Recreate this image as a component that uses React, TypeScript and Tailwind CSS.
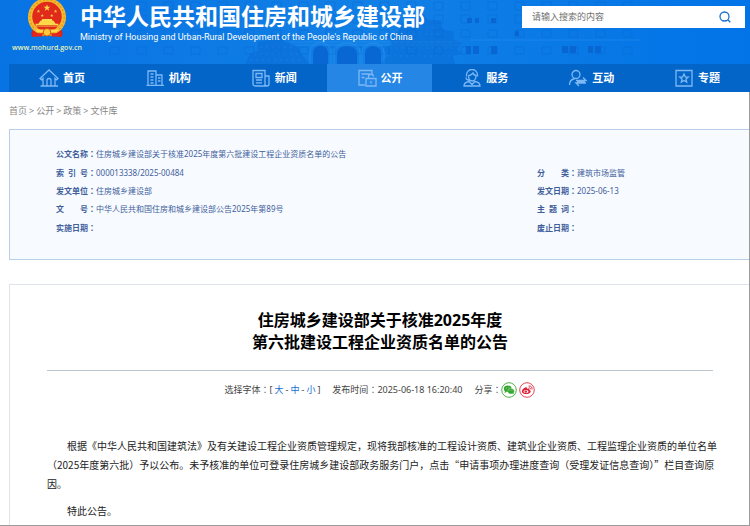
import React from "react";
import type { ReactNode } from "react";

const line = { fill: "none", stroke: "currentColor", strokeWidth: 1.3 } as const;

function NavIcon({ children }: { children: ReactNode }) {
  return (
    <svg viewBox="0 0 20 18" className="h-[18px] w-5 shrink-0 text-[#7db9f5]" aria-hidden="true" {...line}>
      {children}
    </svg>
  );
}

const navItems: { label: string; active?: boolean; icon: ReactNode }[] = [
  {
    label: "首页",
    icon: <path d="M1 9.5 10 1l9 8.5-1.5 1.3L16 9.5V17h-4v-5.5a2 2 0 0 0-4 0V17H4V9.500L2.500 10.800ZM1.500 17H19" />,
  },
  {
    label: "机构",
    icon: <path d="M3 16V2h8v14M11 6h6v10M1.500 16.300H19M5.500 5h3M5.500 8h3M5.500 11h3M5.500 14h3M13 9h2.500M13 12h2.500" />,
  },
  {
    label: "新闻",
    icon: <path d="M2 1.500h12V17H4a2 2 0 0 1-2-2ZM14 7h4v8a2 2 0 0 1-4 0M5 4.500h6v4H5ZM5 11h6M5 13.800h6" />,
  },
  {
    label: "公开",
    active: true,
    icon: (
      <path d="M8 16H2V1.500h13V6M4.500 5h8M4.500 8.500h3M9 9.500h10V17H9ZM11.500 9.500V8a2.500 2.500 0 0 1 5-.5M14 12v2.500" />
    ),
  },
  {
    label: "服务",
    icon: (
      <path d="M4.500 7.500V6a5.500 5.500 0 0 1 11 0v1.500M6.500 6.500C9 6.500 10 5 11 4c.5 1.500 1.500 2.500 3 2.500 0 3-1.500 5.500-3.800 5.500S6.500 9.500 6.500 6.500M4 8.500c0 2 2 2.800 4 2.800M2 17c0-2.500 2-4 5-4.500l3 3 3-3c3 .5 5 2 5 4.500Z" />
    ),
  },
  {
    label: "互动",
    icon: (
      <path d="M8 1.500a4 4 0 1 1 0 8 4 4 0 0 1 0-8M1.500 16c0-4 2.500-6 5.500-6.500M8 11.500h10l-3-3M18 14H8l3 3M9 12.800h8" />
    ),
  },
  {
    label: "专题",
    icon: (
      <path d="M2 1.500h16V17H2ZM10 5l1.300 2.800 3 .3-2.300 2 .7 3-2.700-1.600-2.700 1.600.7-3-2.300-2 3-.3Z" />
    ),
  },
];

function Emblem() {
  const star = "M0-3 .8-1H3L1.200.300 1.900 2.500 0 1.200-1.900 2.500-1.200.300-3-1H-.8Z";
  return (
    <svg viewBox="0 0 42 44" className="-mt-1 h-11 w-10" role="img" aria-label="国徽">
      <path d="M7 34c-3 2-3 5-1 8 5-2 9-1 15-1s10-1 15 1c2-3 2-6-1-8Z" fill="#d9201c" />
      <circle cx="21" cy="21" r="20" fill="#f5b82e" />
      <circle cx="21" cy="21" r="18" fill="none" stroke="#e39a1c" strokeWidth="1.500" strokeDasharray="2 2" />
      <circle cx="21" cy="20.500" r="15.500" fill="#e02a1c" />
      <g fill="#ffd84a">
        <path d={star} transform="translate(21 11.500) scale(1.200)" />
        <path d={star} transform="translate(12 15) scale(.6)" />
        <path d={star} transform="translate(30 15) scale(.6)" />
        <path d={star} transform="translate(16 19.500) scale(.55)" />
        <path d={star} transform="translate(26 19.500) scale(.55)" />
        <path d="M15 25h12l-1-2H16ZM12 28h18l-2-3H14ZM9 31h24v-3H9Z" />
        <path d="M8 34h26l-3 3H11Z" />
      </g>
      <path d="M10 30h22" stroke="#d9201c" strokeWidth=".7" />
      <circle cx="21" cy="37" r="4" fill="#ffc93a" stroke="#c9501b" />
      <path d="M7 35c4 4 8 3 10 3l-2 4c-3-1-6 0-9 0ZM35 35c-4 4-8 3-10 3l2 4c3-1 6 0 9 0Z" fill="#e3271c" />
    </svg>
  );
}

function HeaderScene() {
  const cols = Array.from({ length: 20 }, (_, i) => 110 + i * 27);
  return (
    <svg
      viewBox="0 0 750 64"
      preserveAspectRatio="xMidYMin slice"
      className="absolute inset-0 h-16 w-full"
      aria-hidden="true"
    >
      <defs>
        <linearGradient id="sky" x1="0" x2="1">
          <stop offset="0" stopColor="#0873e3" />
          <stop offset=".5" stopColor="#1180e6" />
          <stop offset=".8" stopColor="#0878e6" />
          <stop offset="1" stopColor="#0274e8" />
        </linearGradient>
      </defs>
      <rect width="750" height="64" fill="url(#sky)" />
      <g fill="none" stroke="#0a6bd6" opacity=".5">
        {cols.map((x) => (
          <path key={x} d={`M${x} 2h9v8h-9ZM${x} 15h9v8h-9ZM${x} 30h9v7h-9ZM${x} 47h9v7h-9Z`} />
        ))}
      </g>
      <path d="M290 42h170M290 45h170M470 40h170" stroke="#2b91ee" opacity=".5" />
      <g fill="#0968d3" opacity=".45">
        <path d="m381 64 7-9-4-6 8-5-5-8 11-4 3-9 12-2 7-10 8 9 13 0 1 9 12 3-1 7 9 4-5 6 5 5-9 2 2 8Z" />
        <path d="m392 64 4-12 6-3-1-11 10-4 6-12 9-3 7 8 10 1 2 12 8 4-3 8 4 12Z" />
        <path d="m245 64 5-10 8-3 0-9 12-2 8-6 7 8 12 4 5 9 8 9Z" />
      </g>
      <g fill="#0862cf" opacity=".8">
        <path d="M313 64V53a7.500 7.500 0 0 1 15 0v11ZM337 64V53a10 7 0 0 1 20 0v11ZM365 64V53a8 7 0 0 1 16 0v11Z" />
        <path d="M466 46h5v8h-5ZM473 46h6v8h-6ZM491 46h6v8h-6ZM562 46h6v7h-6ZM570 46h6v7h-6ZM588 46h5v7h-5ZM595 46h6v7h-6Z" />
        <path d="M467 18h5v5h-5ZM475 18h4v5h-4ZM491 18h5v5h-5ZM515 31h4v5h-4Z" />
      </g>
      <path d="M310 64V52a10 9 0 0 1 21 0v12M334 64V52a13 9 0 0 1 26 0v12M362 64V52a11 9 0 0 1 22 0v12" fill="none" stroke="#3497ee" opacity=".5" />
      <g fill="none" stroke="#2388e5" strokeDasharray="2 4" opacity=".5">
        <path d="M395 42h58M390 48h66M401 34h44M388 56h67M408 27h30M260 47h36M254 54h46M250 60h54" />
      </g>
    </svg>
  );
}

function Colon() {
  return (
    <span lang="zh-TW" className="font-['Noto_Sans_CJK_TC',sans-serif]">
      ：
    </span>
  );
}

function Field({ label, value = "" }: { label: string; value?: string }) {
  return (
    <div className="flex h-full items-center leading-4 whitespace-nowrap">
      <dt className="flex font-bold">
        <span className="flex w-8 justify-between">
          {label.split("").map((c) => (
            <span key={c}>{c}</span>
          ))}
        </span>
        <Colon />
      </dt>
      <dd>{value}</dd>
    </div>
  );
}

export default function App() {
  return (
    <div
      className="h-screen overflow-hidden border-b border-[#9b9b9b] bg-white font-['Noto_Sans','Noto_Sans_CJK_SC',sans-serif] text-[#333]"
      lang="zh-CN"
    >
      <header className="relative bg-[#0873e3]">
        <HeaderScene />
        <div className="relative flex h-16 items-start justify-between pr-[5px] pl-3.5">
          <div className="flex">
            <div className="flex w-[66px] flex-col items-center">
              <Emblem />
              <a href="#home" className="font-['Open_Sans',sans-serif] text-[7px] leading-4 font-semibold text-[#e6f3b4]">
                www.mohurd.gov.cn
              </a>
            </div>
            <div className="whitespace-nowrap text-white">
              <h1 className="h-[31px] text-[23px] leading-8 font-bold">中华人民共和国住房和城乡建设部</h1>
              <p className="font-['Roboto',sans-serif] text-[9px] leading-3">
                Ministry of Housing and Urban-Rural Development of the People's Republic of China
              </p>
            </div>
          </div>
          <form className="mt-1.5 flex h-[22px] w-[223px] items-center bg-white pr-3.5 pl-2.5" onSubmit={(e) => e.preventDefault()}>
            <input
              type="text"
              aria-label="搜索"
              placeholder="请输入搜索的内容"
              className="min-w-0 flex-1 text-[9px] outline-none placeholder:text-[#707070]"
            />
            <button type="submit" aria-label="搜索" className="text-[#1a6fd0]">
              <svg viewBox="0 0 12 12" className="size-3" {...line}>
                <circle cx="5.500" cy="5.500" r="4.500" />
                <path d="m8.800 8.800 2.500 2.500" />
              </svg>
            </button>
          </form>
        </div>
        <nav className="relative ml-[9px] flex h-7 bg-[#0465c9]">
          {navItems.map(({ label, active, icon }) => (
            <a
              key={label}
              href={`#${label}`}
              className={`flex flex-1 items-center justify-center gap-1 text-[11px] font-bold text-white ${active ? "bg-[#2586e6]" : ""}`}
            >
              <NavIcon>{icon}</NavIcon>
              {label}
            </a>
          ))}
        </nav>
      </header>

      <div className="h-full border-r border-[#9b9b9b] pl-[9px]">
        <nav className="flex h-[37px] items-center gap-0.5 text-[9px] text-[#888]" aria-label="位置">
          <a href="#home">首页</a>
          <span>&gt;</span>
          <a href="#open">公开</a>
          <span>&gt;</span>
          <a href="#policy">政策</a>
          <span>&gt;</span>
          <a href="#files">文件库</a>
        </nav>

        <section className="h-[131px] border border-r-0 border-[#b9cfe8] bg-[#f7faff] pt-[15px] pl-[46px] text-[8px] text-[#3f5f9b]">
          <dl className="grid h-[92px] auto-rows-fr grid-cols-[481px_1fr]">
            <div className="col-span-2">
              <Field label="公文名称" value="住房城乡建设部关于核准2025年度第六批建设工程企业资质名单的公告" />
            </div>
            <Field label="索引号" value="000013338/2025-00484" />
            <Field label="分类" value="建筑市场监管" />
            <Field label="发文单位" value="住房城乡建设部" />
            <Field label="发文日期" value="2025-06-13" />
            <Field label="文号" value="中华人民共和国住房和城乡建设部公告2025年第89号" />
            <Field label="主题词" />
            <Field label="实施日期" />
            <Field label="废止日期" />
          </dl>
        </section>

        <article className="mt-6 h-full border-t border-l border-[#dfe4ec] pt-6 pr-9 pl-[37px]">
          <h2 className="pb-[17px] text-center text-[16px] leading-[22px] font-bold text-black">
            住房城乡建设部关于核准2025年度
            <br />
            第六批建设工程企业资质名单的公告
          </h2>
          <div className="flex h-[38px] items-center justify-center border-t border-[#bcc6ce] text-[9px] whitespace-nowrap text-[#444]">
            <div className="mr-3 flex items-center">
              选择字体
              <Colon />[
              <button className="px-0.5 text-[#1a6fd8]">大</button>-
              <button className="px-0.5 text-[#1a6fd8]">中</button>-
              <button className="px-0.5 text-[#1a6fd8]">小</button>]
            </div>
            <span className="mr-3">
              发布时间
              <Colon />
              2025-06-18 16:20:40
            </span>
            <span>
              分享
              <Colon />
            </span>
            <a href="#wechat" aria-label="微信">
              <svg viewBox="0 0 16 16" className="size-4">
                <circle cx="8" cy="8" r="7.300" fill="#fff" stroke="#52b04a" />
                <ellipse cx="6.700" cy="6.800" rx="3.800" ry="3.200" fill="#36a832" />
                <path d="m4 9-.5 2L6 9.800ZM11 11l2 1.500-.5-2.500Z" fill="#36a832" />
                <ellipse cx="10" cy="9.300" rx="3.300" ry="2.700" fill="#36a832" stroke="#fff" strokeWidth=".3" />
                <g fill="#fff">
                  <circle cx="5.500" cy="6" r=".4" />
                  <circle cx="8" cy="6" r=".4" />
                  <circle cx="9" cy="8.800" r=".3" />
                  <circle cx="11" cy="8.800" r=".3" />
                </g>
              </svg>
            </a>
            <a href="#weibo" aria-label="微博" className="ml-0.5">
              <svg viewBox="0 0 16 16" className="size-4">
                <circle cx="8" cy="8" r="7.300" fill="#fff" stroke="#e4485a" />
                <path d="M6.800 5.300C4.700 5.800 2.700 8 2.900 9.700c.4 3 7.600 3.200 8.700.2.400-1.300-.6-1.800-1.200-2 .3-1.500-.8-1.500-2.500-1 .4-1.200-.2-1.800-1.100-1.600Z" fill="#e02035" />
                <ellipse cx="7" cy="9.500" rx="2.500" ry="1.500" fill="#fff" />
                <circle cx="6.800" cy="9.600" r="1.200" fill="#e02035" />
                <path d="M9.500 4c2.500-.4 4 1.300 3.500 3.500M9.800 5.700c1.200-.2 1.800.6 1.500 1.600" fill="none" stroke="#e02035" strokeWidth=".9" />
              </svg>
            </a>
          </div>
          <div className="-mr-1 mt-7 indent-5 font-['Noto_Sans_CJK_SC',sans-serif] text-[10px] leading-[19px] text-[#222]">
            <p>
              根据《中华人民共和国建筑法》及有关建设工程企业资质管理规定，现将我部核准的工程设计资质、建筑业企业资质、工程监理企业资质的单位名单（2025年度第六批）予以公布。未予核准的单位可登录住房城乡建设部政务服务门户，点击“申请事项办理进度查询（受理发证信息查询）”栏目查询原因。
            </p>
            <p className="mt-2">特此公告。</p>
          </div>
        </article>
      </div>
    </div>
  );
}
